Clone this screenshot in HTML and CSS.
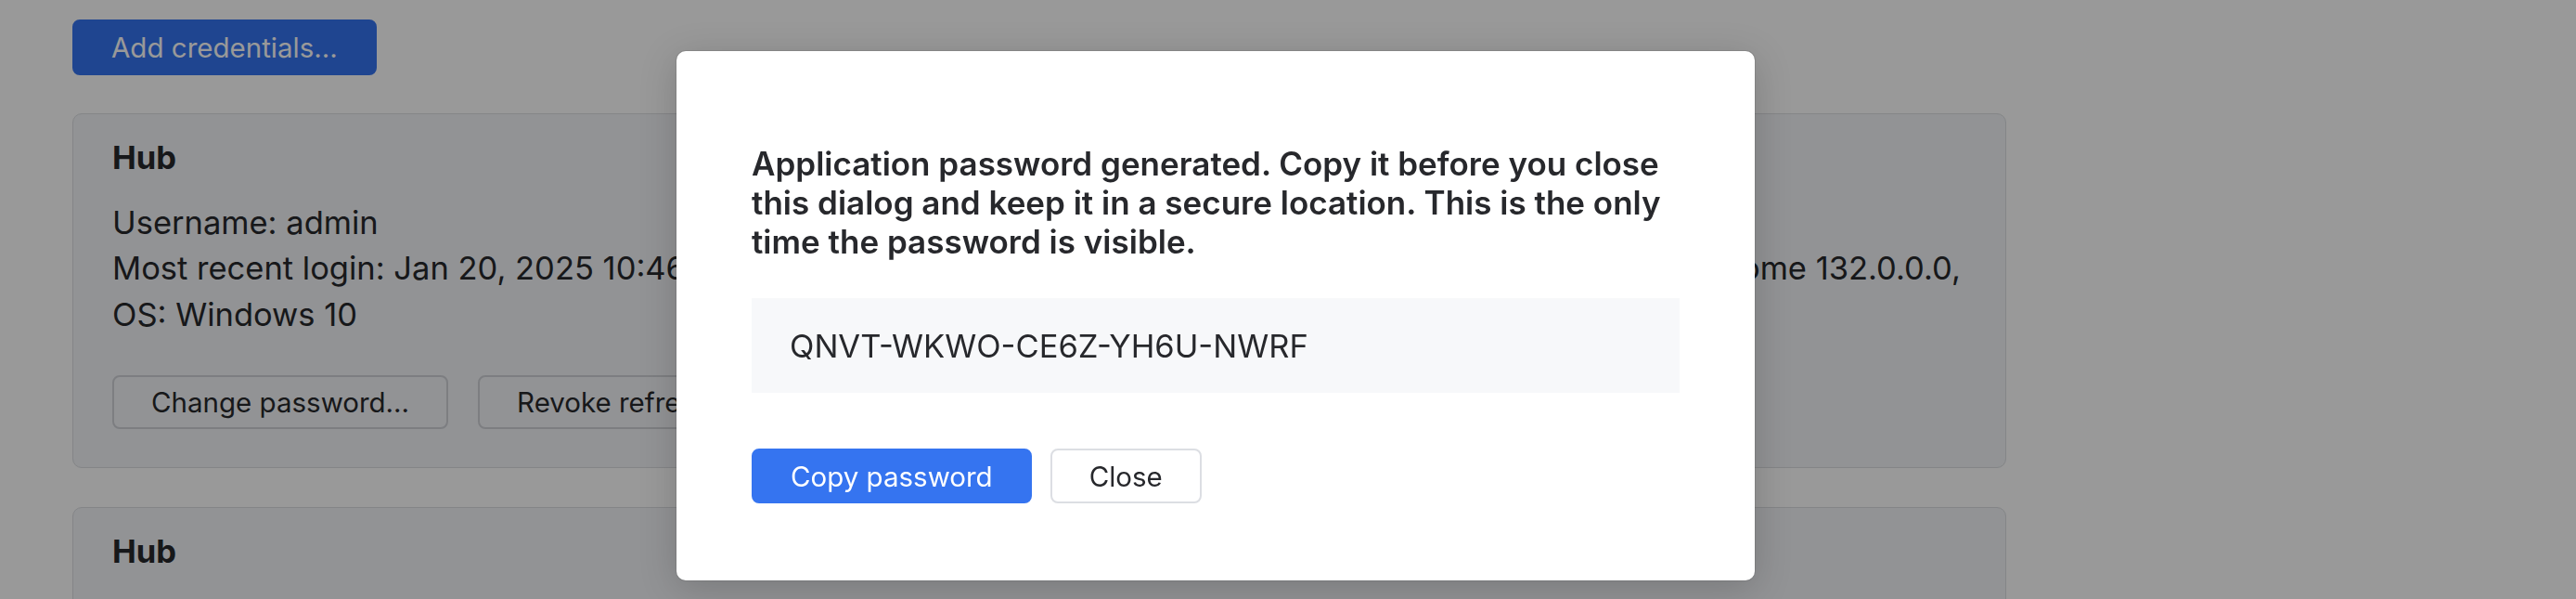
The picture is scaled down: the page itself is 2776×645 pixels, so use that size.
FILE: index.html
```html
<!DOCTYPE html>
<html lang="en">
<head>
    <meta charset="UTF-8">
    <meta name="viewport" content="width=device-width, initial-scale=1.0">
    <title>Application passwords</title>
    <link rel="stylesheet" href="styles.css">
</head>
<body>
    <div class="page">
        <button type="button" class="btn btn-primary">Add credentials...</button>

        <!-- Credentials list -->
        <div class="cred-card">
            <h3>Hub</h3>
            <p class="cred-info">
                Username: admin<br>
                Most recent login: Jan 20, 2025 10:46:52 AM, IP address: 192.168.178.104, Location: Unknown, Browser: Chrome 132.0.0.0,
                OS: Windows 10
            </p>
            <div class="cred-actions">
                <button type="button" class="btn">Change password...</button>
                <button type="button" class="btn">Revoke refresh tokens</button>
            </div>
        </div>

        <div class="cred-card">
            <h3>Hub</h3>
            <p class="cred-info">
                Application password: Hub<br>
                Created: Jan 20, 2025 10:47:05 AM
            </p>
        </div>
    </div>

    <!-- Dialog -->
    <div class="overlay"></div>
    <div class="dialog">
        <p class="dialog-text">Application password generated. Copy it before you close this dialog and keep it in a secure location. This is the only time the password is visible.</p>
        <div class="password-box">QNVT-WKWO-CE6Z-YH6U-NWRF</div>
        <div class="dialog-actions">
            <button type="button" class="btn btn-primary">Copy password</button>
            <button type="button" class="btn btn-white">Close</button>
        </div>
    </div>
</body>
</html>
```

FILE: styles.css
```css
html {
    overflow: hidden;
}

body {
    font-family: Inter, "Noto Sans", sans-serif;
    margin: 0;
    padding: 0;
    background: #fff;
    color: #27282c;
}

.page {
    padding: 21px 78px;
}

.btn {
    box-sizing: border-box;
    height: 59px;
    padding: 0 40px;
    font-family: inherit;
    font-size: 29.5px;
    white-space: nowrap;
    color: #27282c;
    background: transparent;
    border: 2px solid #d0d2d8;
    border-radius: 8px;
    cursor: pointer;
}

.btn-primary {
    background: #3574f0;
    border-color: #3574f0;
    color: #fff;
}

.btn-white {
    background: #fff;
    border-color: #dcdee3;
}

.page > .btn-primary {
    height: 60px;
}

.cred-card {
    box-sizing: border-box;
    width: 2084px;
    margin-top: 41px;
    padding: 22px 41px 41px 42px;
    background: #f3f5f8;
    border: 1px solid #dcdee2;
    border-radius: 10px;
}

.cred-card + .cred-card {
    margin-top: 42px;
}

.cred-card h3 {
    margin: 0 0 20px;
    font-size: 34.5px;
    line-height: 49.5px;
    font-weight: 700;
}

.cred-info {
    margin: 0;
    font-size: 34.5px;
    line-height: 49.5px;
}

.cred-actions {
    display: flex;
    gap: 32px;
    margin-top: 41px;
}

.cred-actions .btn {
    height: 58px;
}

.overlay {
    position: fixed;
    inset: 0;
    background: rgba(0, 0, 0, 0.4);
}

.dialog {
    position: absolute;
    left: 729px;
    top: 55px;
    box-sizing: border-box;
    width: 1162px;
    height: 570px;
    padding: 100px 81px 81px;
    background: #fff;
    border-radius: 10px;
    box-shadow: 0 0 0 1px rgba(0, 0, 0, 0.08), 0 8px 40px rgba(0, 0, 0, 0.18);
}

.dialog-text {
    margin: 0;
    font-size: 35px;
    line-height: 42px;
    font-weight: 600;
}

.password-box {
    display: flex;
    align-items: center;
    height: 102px;
    margin-top: 40px;
    padding: 0 41px;
    background: #f7f8fa;
    font-size: 34.5px;
}

.dialog-actions {
    display: flex;
    gap: 20px;
    margin-top: 60px;
}
```
